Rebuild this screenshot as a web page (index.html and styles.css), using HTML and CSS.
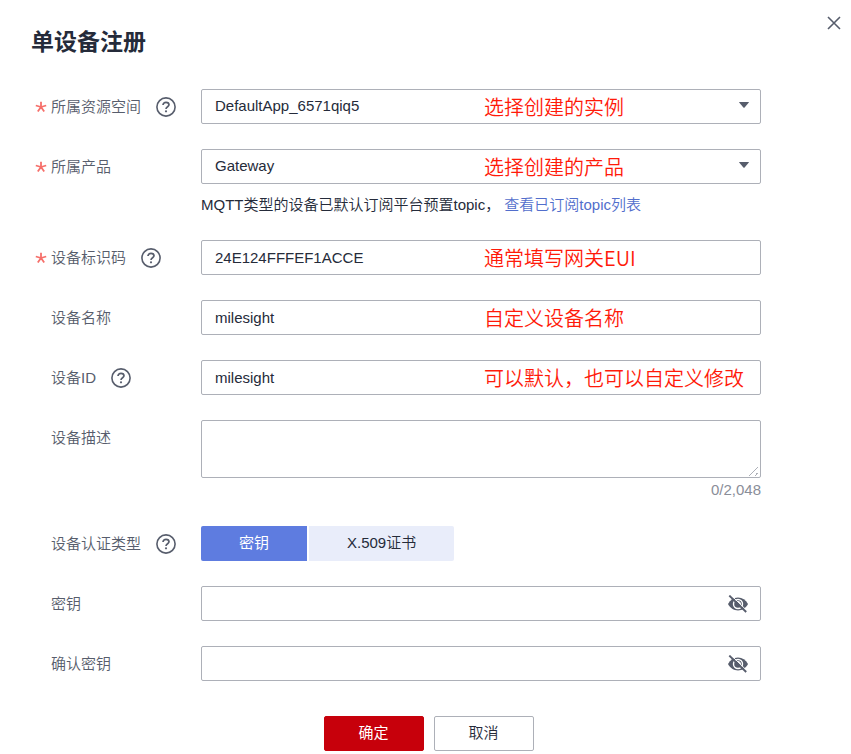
FILE: index.html
```html
<!DOCTYPE html>
<html lang="zh-CN">
<head>
<meta charset="utf-8">
<meta name="viewport" content="width=device-width, initial-scale=1">
<title>单设备注册</title>
<link rel="stylesheet" href="styles.css">
</head>
<body>
<svg class="sprite" aria-hidden="true">
  <symbol id="help" viewBox="0 0 20 20">
    <circle cx="10" cy="10" r="9.100" fill="none" stroke="currentColor" stroke-width="1.600"/>
    <path d="M7 8.100C7 6.300 8.300 5.300 10 5.300s3 1 3 2.500c0 1.900-3 2-3 4.200" fill="none" stroke="currentColor" stroke-width="1.700"/>
    <circle cx="10" cy="14.300" r="1.100" fill="currentColor"/>
  </symbol>
  <symbol id="star" viewBox="0 0 12 12">
    <path d="M6 6V.8M6 6L.8 4.500M6 6l5.200-1.500M6 6l-3.200 4.600M6 6l3.200 4.600" fill="none" stroke="currentColor" stroke-width="1.800"/>
  </symbol>
  <symbol id="caret" viewBox="0 0 10 6">
    <path d="M.3 0h9.400q.4.200.1.600L5.600 5.600q-.6.500-1.200 0L.2.600Q-.1.200.3 0z" fill="currentColor"/>
  </symbol>
  <symbol id="eye-off" viewBox="0 0 20 18">
    <path d="M0 9C2.200 4.800 5.700 2.600 10 2.600S17.800 4.800 20 9c-2.200 4.200-5.700 6.400-10 6.400S2.200 13.200 0 9z" fill="currentColor"/>
    <circle cx="10" cy="9" r="4.500" fill="none" stroke="#fff" stroke-width="1.400"/>
    <path d="M10 6.600a2.400 2.400 0 0 1 2.400 2.400" fill="none" stroke="#fff" stroke-width="1.200"/>
    <path d="M2.400-.4L19.200 15.900" stroke="#fff" stroke-width="1"/>
    <path d="M1.300.6L18.200 17" stroke="currentColor" stroke-width="1.900"/>
  </symbol>
</svg>
<main class="dialog">
  <button class="close" type="button" aria-label="关闭">
    <svg viewBox="0 0 14 14" width="14" height="14"><path d="M1 1l12 12M13 1L1 13" stroke="currentColor" stroke-width="1.600" fill="none"/></svg>
  </button>
  <h1 class="title">单设备注册</h1>
  <form class="form">
    <div class="row">
      <div class="label"><svg class="star"><use href="#star"/></svg><label for="space">所属资源空间</label><svg class="help"><use href="#help"/></svg></div>
      <div class="field">
        <select class="control" id="space"><option>DefaultApp_6571qiq5</option></select>
        <svg class="caret"><use href="#caret"/></svg>
        <span class="note">选择创建的实例</span>
      </div>
    </div>
    <div class="row">
      <div class="label"><svg class="star"><use href="#star"/></svg><label for="product">所属产品</label></div>
      <div class="field">
        <select class="control" id="product"><option>Gateway</option></select>
        <svg class="caret"><use href="#caret"/></svg>
        <span class="note">选择创建的产品</span>
      </div>
      <p class="hint">MQTT类型的设备已默认订阅平台预置topic， <a href="#topics">查看已订阅topic列表</a></p>
    </div>
    <div class="row">
      <div class="label"><svg class="star"><use href="#star"/></svg><label for="code">设备标识码</label><svg class="help"><use href="#help"/></svg></div>
      <div class="field">
        <input class="control" id="code" type="text" value="24E124FFFEF1ACCE">
        <span class="note">通常填写网关EUI</span>
      </div>
    </div>
    <div class="row">
      <div class="label"><label for="name">设备名称</label></div>
      <div class="field">
        <input class="control" id="name" type="text" value="milesight">
        <span class="note">自定义设备名称</span>
      </div>
    </div>
    <div class="row">
      <div class="label"><label for="device-id">设备ID</label><svg class="help"><use href="#help"/></svg></div>
      <div class="field">
        <input class="control" id="device-id" type="text" value="milesight">
        <span class="note">可以默认，也可以自定义修改</span>
      </div>
    </div>
    <div class="row">
      <div class="label"><label for="desc">设备描述</label></div>
      <div class="field">
        <textarea class="control area" id="desc"></textarea>
        <div class="count">0/2,048</div>
      </div>
    </div>
    <div class="row">
      <div class="label"><span id="auth">设备认证类型</span><svg class="help"><use href="#help"/></svg></div>
      <div class="field tabs" role="group" aria-labelledby="auth">
        <button class="tab active" type="button" aria-pressed="true">密钥</button>
        <button class="tab" type="button" aria-pressed="false">X.509证书</button>
      </div>
    </div>
    <div class="row">
      <div class="label"><label for="secret">密钥</label></div>
      <div class="field">
        <input class="control" id="secret" type="password">
        <button class="eye" type="button" aria-label="显示密钥"><svg><use href="#eye-off"/></svg></button>
      </div>
    </div>
    <div class="row">
      <div class="label"><label for="confirm">确认密钥</label></div>
      <div class="field">
        <input class="control" id="confirm" type="password">
        <button class="eye" type="button" aria-label="显示确认密钥"><svg><use href="#eye-off"/></svg></button>
      </div>
    </div>
  </form>
  <div class="actions">
    <button class="btn primary" type="button">确定</button>
    <button class="btn" type="button">取消</button>
  </div>
</main>
</body>
</html>
```
FILE: styles.css
```css
* {
  box-sizing: border-box;
}

body {
  margin: 0;
  background: #fff;
  color: #252b3a;
  font: 350 15px/20px "Liberation Sans", "Noto Sans CJK SC", sans-serif;
}

button,
input,
select,
textarea {
  font: inherit;
  color: inherit;
}

button {
  cursor: pointer;
}

.sprite {
  position: absolute;
  width: 0;
  height: 0;
}

.dialog {
  position: relative;
  padding: 24px 90px 0 31px;
}

.close {
  position: absolute;
  top: 16px;
  right: 10px;
  display: flex;
  padding: 0;
  border: 0;
  background: none;
  color: #575d6c;
}

.title {
  margin: 0 0 29px;
  font-size: 23px;
  line-height: 36px;
  font-weight: 700;
}

.form {
  display: grid;
  gap: 25px;
}

.row {
  display: grid;
  grid-template-columns: 170px minmax(0, 1fr);
}

.label {
  position: relative;
  display: flex;
  align-items: center;
  gap: 15px;
  height: 35px;
  padding-left: 20px;
  color: #575d6c;
}

.star {
  position: absolute;
  left: 4px;
  width: 12px;
  height: 12px;
  color: #f66f6a;
}

.help {
  width: 20px;
  height: 20px;
}

.field {
  position: relative;
}

.control {
  display: block;
  width: 100%;
  height: 35px;
  padding: 0 13px 1px;
  border: 1px solid #adb0b8;
  border-radius: 2px;
  background: #fff;
  appearance: none;
  outline: 0;
}

.area {
  height: 58px;
  padding: 6px 13px;
  resize: vertical;
}

.area::-webkit-resizer {
  background: linear-gradient(135deg, transparent 52%, #adb0b8 52% 59%, transparent 59% 80%, #adb0b8 80% 87%, transparent 87%) 3px 4px / 10px 10px no-repeat;
}

.caret {
  position: absolute;
  top: 13px;
  right: 12px;
  width: 10px;
  height: 6px;
  color: #575d6c;
  pointer-events: none;
}

.note {
  position: absolute;
  top: 3px;
  left: 283px;
  color: #ff1a0a;
  font-size: 20px;
  line-height: 30px;
  font-family: "Noto Sans CJK SC", sans-serif;
  white-space: nowrap;
  pointer-events: none;
}

.hint {
  grid-column: 2;
  margin: 11px 0 0;
}

.hint a {
  color: #526ecc;
  text-decoration: none;
}

.count {
  padding-top: 2px;
  padding-bottom: 1px;
  color: #8a8e99;
  text-align: right;
}

.tabs {
  display: flex;
  gap: 2px;
}

.tab {
  height: 35px;
  padding: 0 38px 1px;
  border: 0;
  border-radius: 0 2px 2px 0;
  background: #e9edfa;
}

.active {
  border-radius: 2px 0 0 2px;
  background: #5e7ce0;
  color: #fff;
  font-weight: 400;
}

.eye {
  position: absolute;
  top: 9px;
  right: 13px;
  display: flex;
  padding: 0;
  border: 0;
  background: none;
  color: #575d6c;
}

.eye svg {
  width: 20px;
  height: 18px;
}

.actions {
  display: flex;
  justify-content: center;
  gap: 10px;
  margin-top: 35px;
  padding-left: 65px;
}

.btn {
  width: 100px;
  height: 35px;
  padding: 0 0 1px;
  border: 1px solid #adb0b8;
  border-radius: 2px;
  background: #fff;
}

.primary {
  border-color: #c7000b;
  background: #c7000b;
  color: #fff;
  font-weight: 400;
}
```
